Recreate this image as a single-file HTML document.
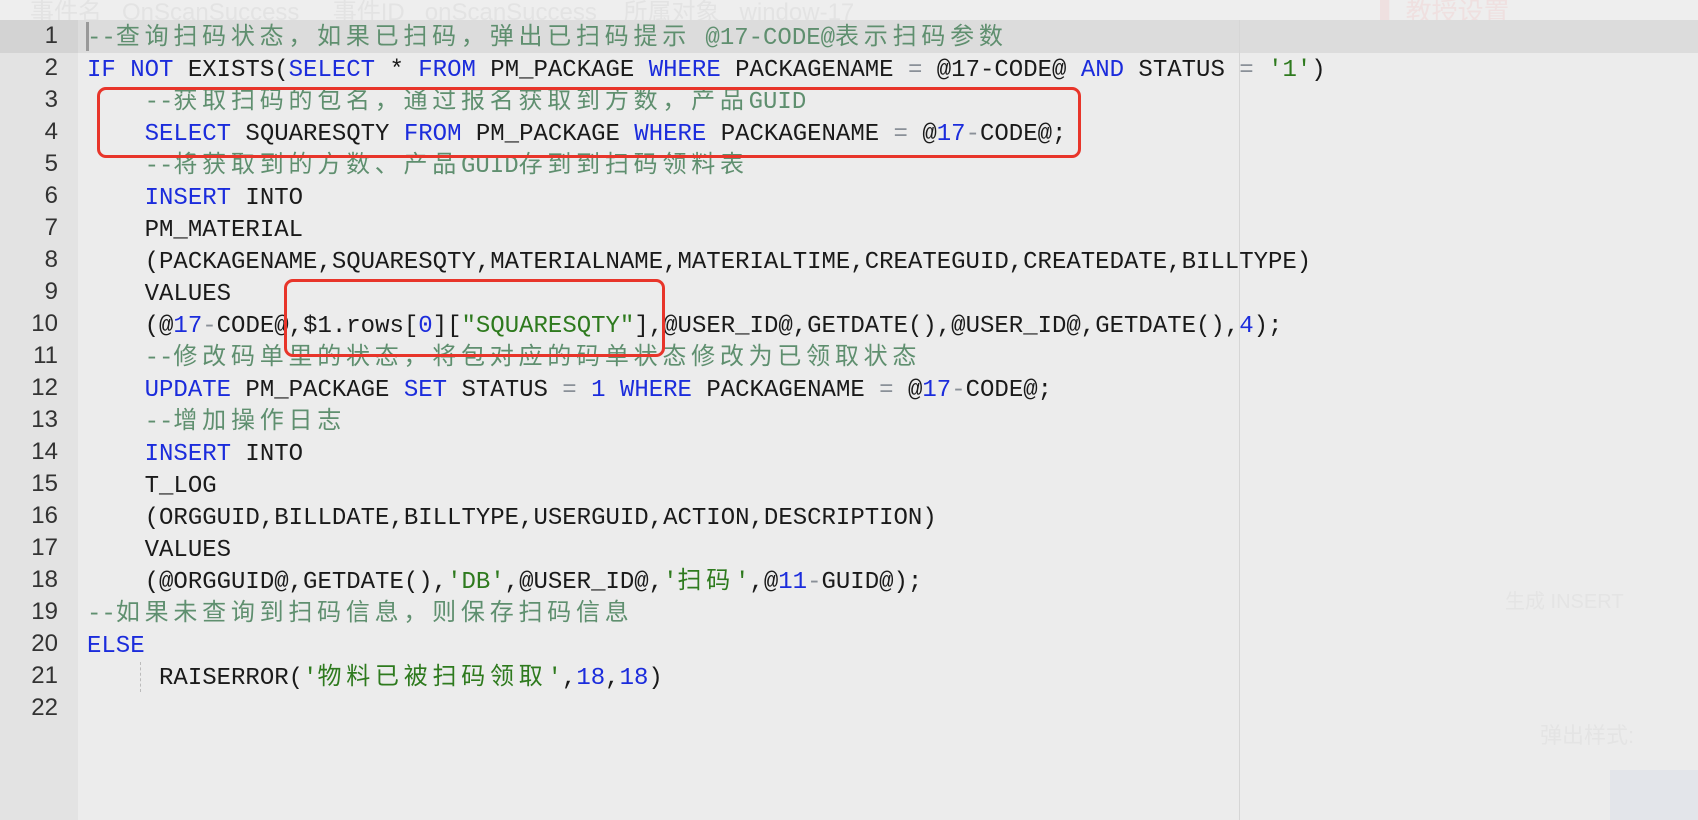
<!DOCTYPE html>
<html><head><meta charset="utf-8"><style>
html,body{margin:0;padding:0;overflow:hidden;width:1698px;height:820px;}
body{background:#ececec;position:relative;font-family:"Liberation Mono","Noto Sans CJK SC",monospace;}
.top{position:absolute;left:0;top:0;width:1698px;height:20px;background:#eeeeee;}
.gut{position:absolute;left:0;top:20px;width:78px;height:800px;background:#e3e3e3;}
.band{position:absolute;left:0;top:20px;width:1698px;height:33px;background:#dcdcdc;}
.gband{position:absolute;left:0;top:20px;width:78px;height:33px;background:#d3d3d3;}
.ruler{position:absolute;left:1239px;top:20px;width:1px;height:800px;background:#d6d6d6;}
.ln{position:absolute;left:0;width:58px;text-align:right;font-size:24px;color:#333;line-height:32px;font-family:"Liberation Sans","DejaVu Sans",sans-serif;}
.code{position:absolute;left:87px;top:23px;font-size:24px;line-height:32px;color:#1a1a1a;}
.code div{height:32px;white-space:pre;}
.k{color:#1b2cdc}.n{color:#1b2cdc}.c{color:#5f8f6f}.s{color:#2e7a1e}.o{color:#8a9098}
.z{letter-spacing:4.76px;font-family:"Noto Sans CJK SC",sans-serif;line-height:0;}
.box{position:absolute;border:3px solid #e8352a;border-radius:9px;}
.cur{position:absolute;left:86px;top:22px;width:3px;height:29px;background:#999;}
.guide{position:absolute;left:140px;top:662px;height:30px;border-left:1px dashed #bbb;}
.faint{position:absolute;color:#e4e4e4;font-family:"Liberation Sans","Noto Sans CJK SC",sans-serif;white-space:nowrap;}
.btn{position:absolute;left:1610px;top:770px;width:88px;height:50px;background:#e3e5ea;}
</style></head><body>
<div class="top"></div>
<div class="faint" style="left:30px;top:-8px;font-size:24px;color:#e3e3e3">事件名 &nbsp; OnScanSuccess &nbsp;&nbsp;&nbsp; 事件ID &nbsp; onScanSuccess &nbsp;&nbsp; 所属对象 &nbsp; window-17</div>
<div class="faint" style="left:1380px;top:-8px;font-size:26px;color:#efe0e0">▌ 教授设置</div>
<div class="gut"></div>
<div class="band"></div>
<div class="gband"></div>
<div class="ruler"></div>
<div class="faint" style="left:1540px;top:718px;font-size:22px;color:#e4e4e4">弹出样式:</div>
<div class="faint" style="left:1505px;top:585px;font-size:20px;color:#e4e4e4">生成 INSERT</div>
<div class="btn"></div>
<div class="cur"></div>
<div class="guide"></div>
<div class="ln" style="top:20px">1</div><div class="ln" style="top:52px">2</div><div class="ln" style="top:84px">3</div><div class="ln" style="top:116px">4</div><div class="ln" style="top:148px">5</div><div class="ln" style="top:180px">6</div><div class="ln" style="top:212px">7</div><div class="ln" style="top:244px">8</div><div class="ln" style="top:276px">9</div><div class="ln" style="top:308px">10</div><div class="ln" style="top:340px">11</div><div class="ln" style="top:372px">12</div><div class="ln" style="top:404px">13</div><div class="ln" style="top:436px">14</div><div class="ln" style="top:468px">15</div><div class="ln" style="top:500px">16</div><div class="ln" style="top:532px">17</div><div class="ln" style="top:564px">18</div><div class="ln" style="top:596px">19</div><div class="ln" style="top:628px">20</div><div class="ln" style="top:660px">21</div><div class="ln" style="top:692px">22</div>
<div class="code"><div><span class="c">--<span class="z">查询扫码状态，如果已扫码，弹出已扫码提示</span> @17-CODE@<span class="z">表示扫码参数</span></span></div><div><span class="k">IF NOT</span> EXISTS(<span class="k">SELECT</span> * <span class="k">FROM</span> PM_PACKAGE <span class="k">WHERE</span> PACKAGENAME <span class="o">=</span> @17-CODE@ <span class="k">AND</span> STATUS <span class="o">=</span> <span class="s">'1'</span>)</div><div>    <span class="c">--<span class="z">获取扫码的包名，通过报名获取到方数，产品</span>GUID</span></div><div>    <span class="k">SELECT</span> SQUARESQTY <span class="k">FROM</span> PM_PACKAGE <span class="k">WHERE</span> PACKAGENAME <span class="o">=</span> @<span class="n">17</span><span class="o">-</span>CODE@;</div><div>    <span class="c">--<span class="z">将获取到的方数、产品</span>GUID<span class="z">存到到扫码领料表</span></span></div><div>    <span class="k">INSERT</span> INTO</div><div>    PM_MATERIAL</div><div>    (PACKAGENAME,SQUARESQTY,MATERIALNAME,MATERIALTIME,CREATEGUID,CREATEDATE,BILLTYPE)</div><div>    VALUES</div><div>    (@<span class="n">17</span><span class="o">-</span>CODE@,$1.rows[<span class="n">0</span>][<span class="s">"SQUARESQTY"</span>],@USER_ID@,GETDATE(),@USER_ID@,GETDATE(),<span class="n">4</span>);</div><div>    <span class="c">--<span class="z">修改码单里的状态，将包对应的码单状态修改为已领取状态</span></span></div><div>    <span class="k">UPDATE</span> PM_PACKAGE <span class="k">SET</span> STATUS <span class="o">=</span> <span class="n">1</span> <span class="k">WHERE</span> PACKAGENAME <span class="o">=</span> @<span class="n">17</span><span class="o">-</span>CODE@;</div><div>    <span class="c">--<span class="z">增加操作日志</span></span></div><div>    <span class="k">INSERT</span> INTO</div><div>    T_LOG</div><div>    (ORGGUID,BILLDATE,BILLTYPE,USERGUID,ACTION,DESCRIPTION)</div><div>    VALUES</div><div>    (@ORGGUID@,GETDATE(),<span class="s">'DB'</span>,@USER_ID@,<span class="s">'<span class="z">扫码</span>'</span>,@<span class="n">11</span><span class="o">-</span>GUID@);</div><div><span class="c">--<span class="z">如果未查询到扫码信息，则保存扫码信息</span></span></div><div><span class="k">ELSE</span></div><div>     RAISERROR(<span class="s">'<span class="z">物料已被扫码领取</span>'</span>,<span class="n">18</span>,<span class="n">18</span>)</div><div></div></div>
<div class="box" style="left:97px;top:87px;width:978px;height:65px"></div>
<div class="box" style="left:284px;top:279px;width:375px;height:72px"></div>
</body></html>
